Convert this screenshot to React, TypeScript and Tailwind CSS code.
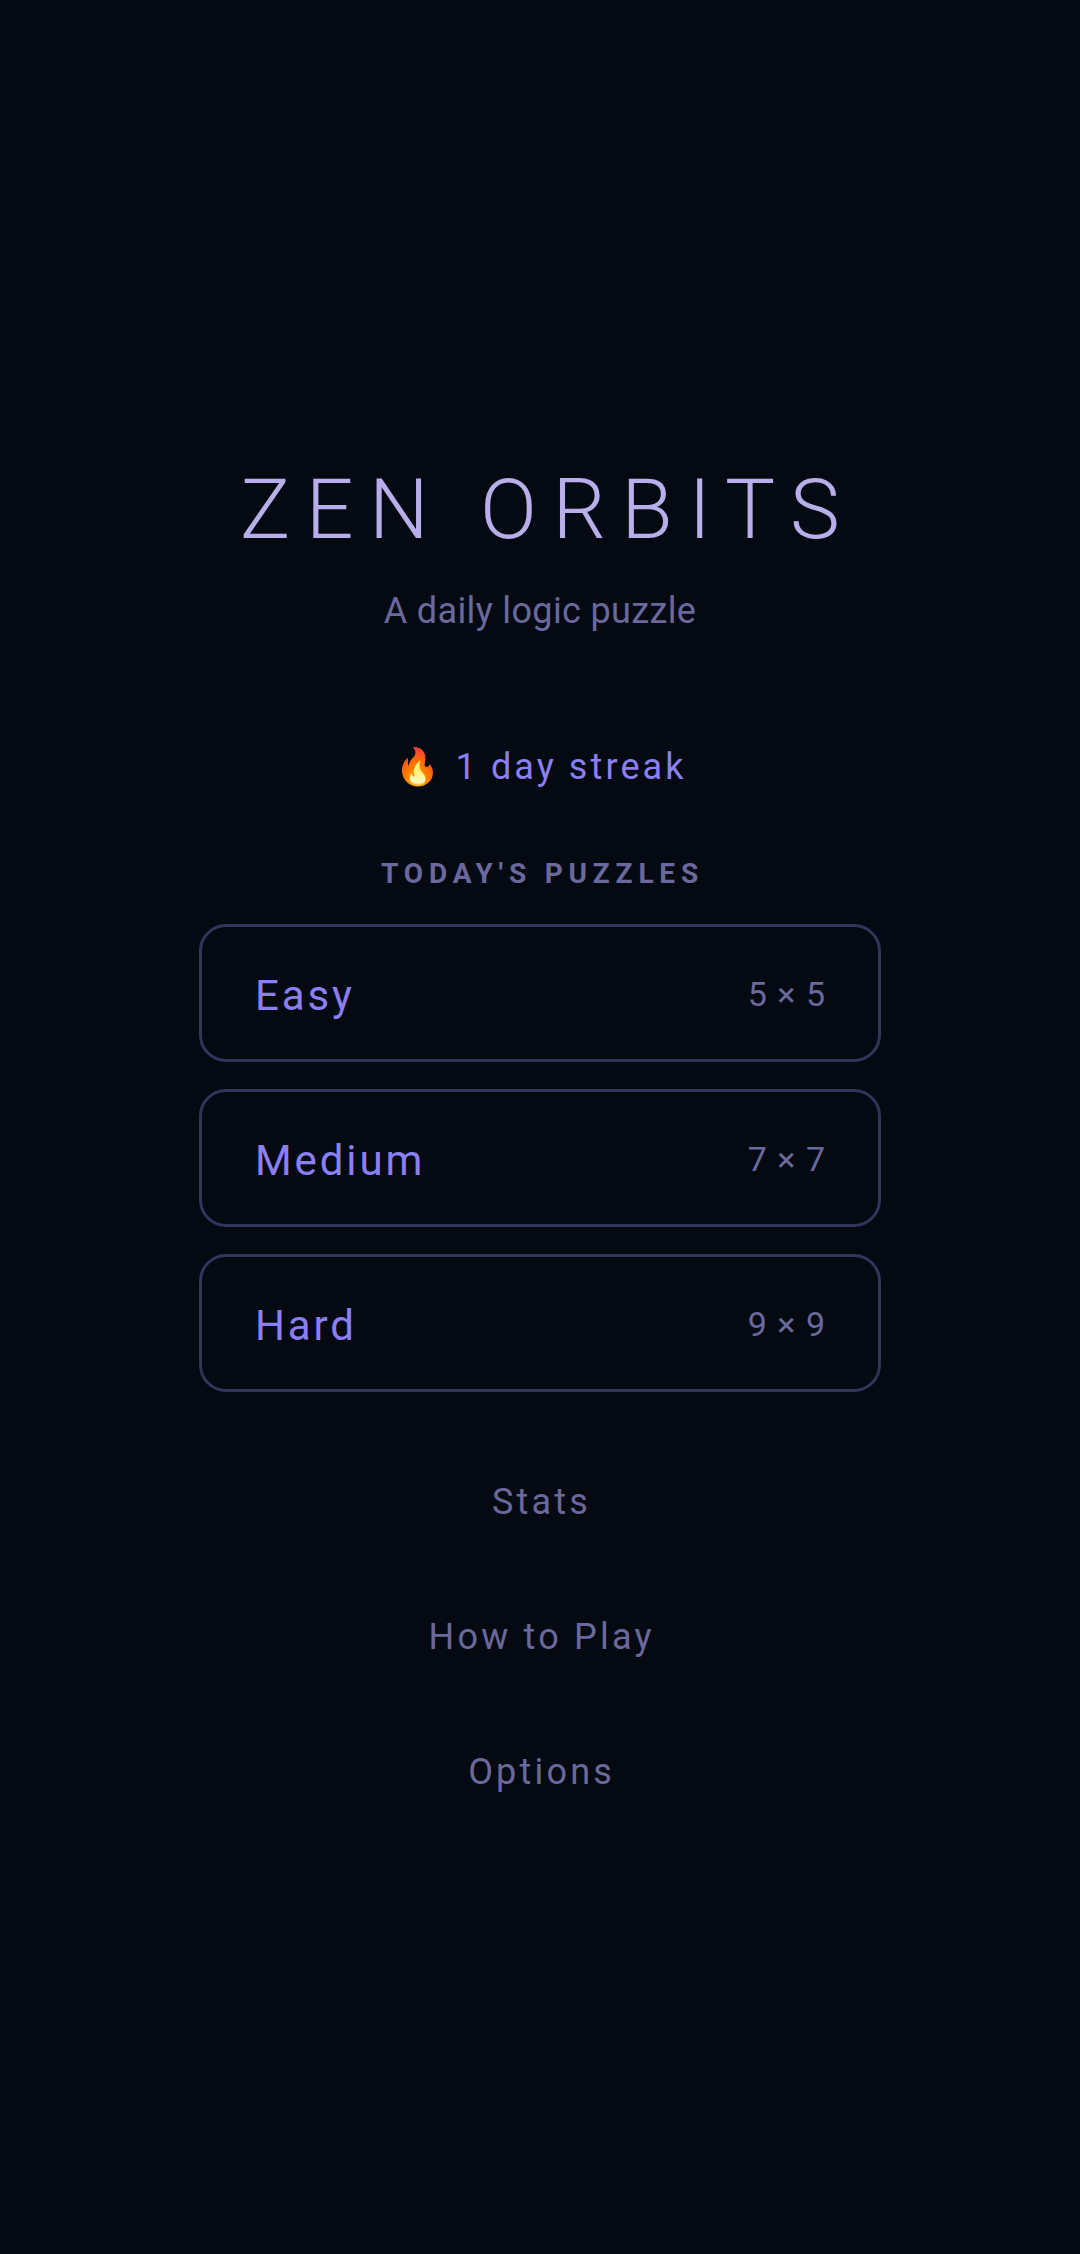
import React from 'react';

const puzzles = [
  { name: 'Easy', size: '5 × 5' },
  { name: 'Medium', size: '7 × 7' },
  { name: 'Hard', size: '9 × 9' },
];

const links = ['Stats', 'How to Play', 'Options'];

export default function App() {
  return (
    <div className="min-h-[2254px] bg-[#050a12] flex flex-col items-center pt-[461px] font-['Roboto',sans-serif]">
      <h1 className="text-[84px] leading-[98px] font-light tracking-[15.5px] pl-[15.3px] text-[#b8aeea]">ZEN ORBITS</h1>
      <p className="mt-[31px] text-[36px] leading-[42px] tracking-[0.36px] text-[#6a689c]">A daily logic puzzle</p>
      <div className="mt-[114px] text-[36px] leading-[42px] tracking-[3.1px] pl-[2px] text-[#8b7ff5]">🔥 1 day streak</div>
      <div className="mt-[69px] text-[28px] leading-[33px] font-bold tracking-[5.8px] pl-[5px] text-[#6a689c]">TODAY'S PUZZLES</div>
      <div className="mt-[34px] flex flex-col gap-[27px] w-[682px]">
        {puzzles.map((p) => (
          <div key={p.name} className="h-[138px] border-[3px] border-[#33335c] rounded-[27px] flex items-center justify-between px-[53px] pt-[2px]">
            <span className="mt-[2px] text-[42px] tracking-[2.9px] text-[#8b7ff5]">{p.name}</span>
            <span className="text-[34px] tracking-[1px] -mr-[1px] text-[#6a689c]">{p.size}</span>
          </div>
        ))}
      </div>
      <div className="mt-[42px] flex flex-col items-center">
        {links.map((l) => (
          <div key={l} className="h-[135px] flex items-center text-[36px] tracking-[3.2px] pl-[3.2px] text-[#6a689c]">{l}</div>
        ))}
      </div>
    </div>
  );
}
